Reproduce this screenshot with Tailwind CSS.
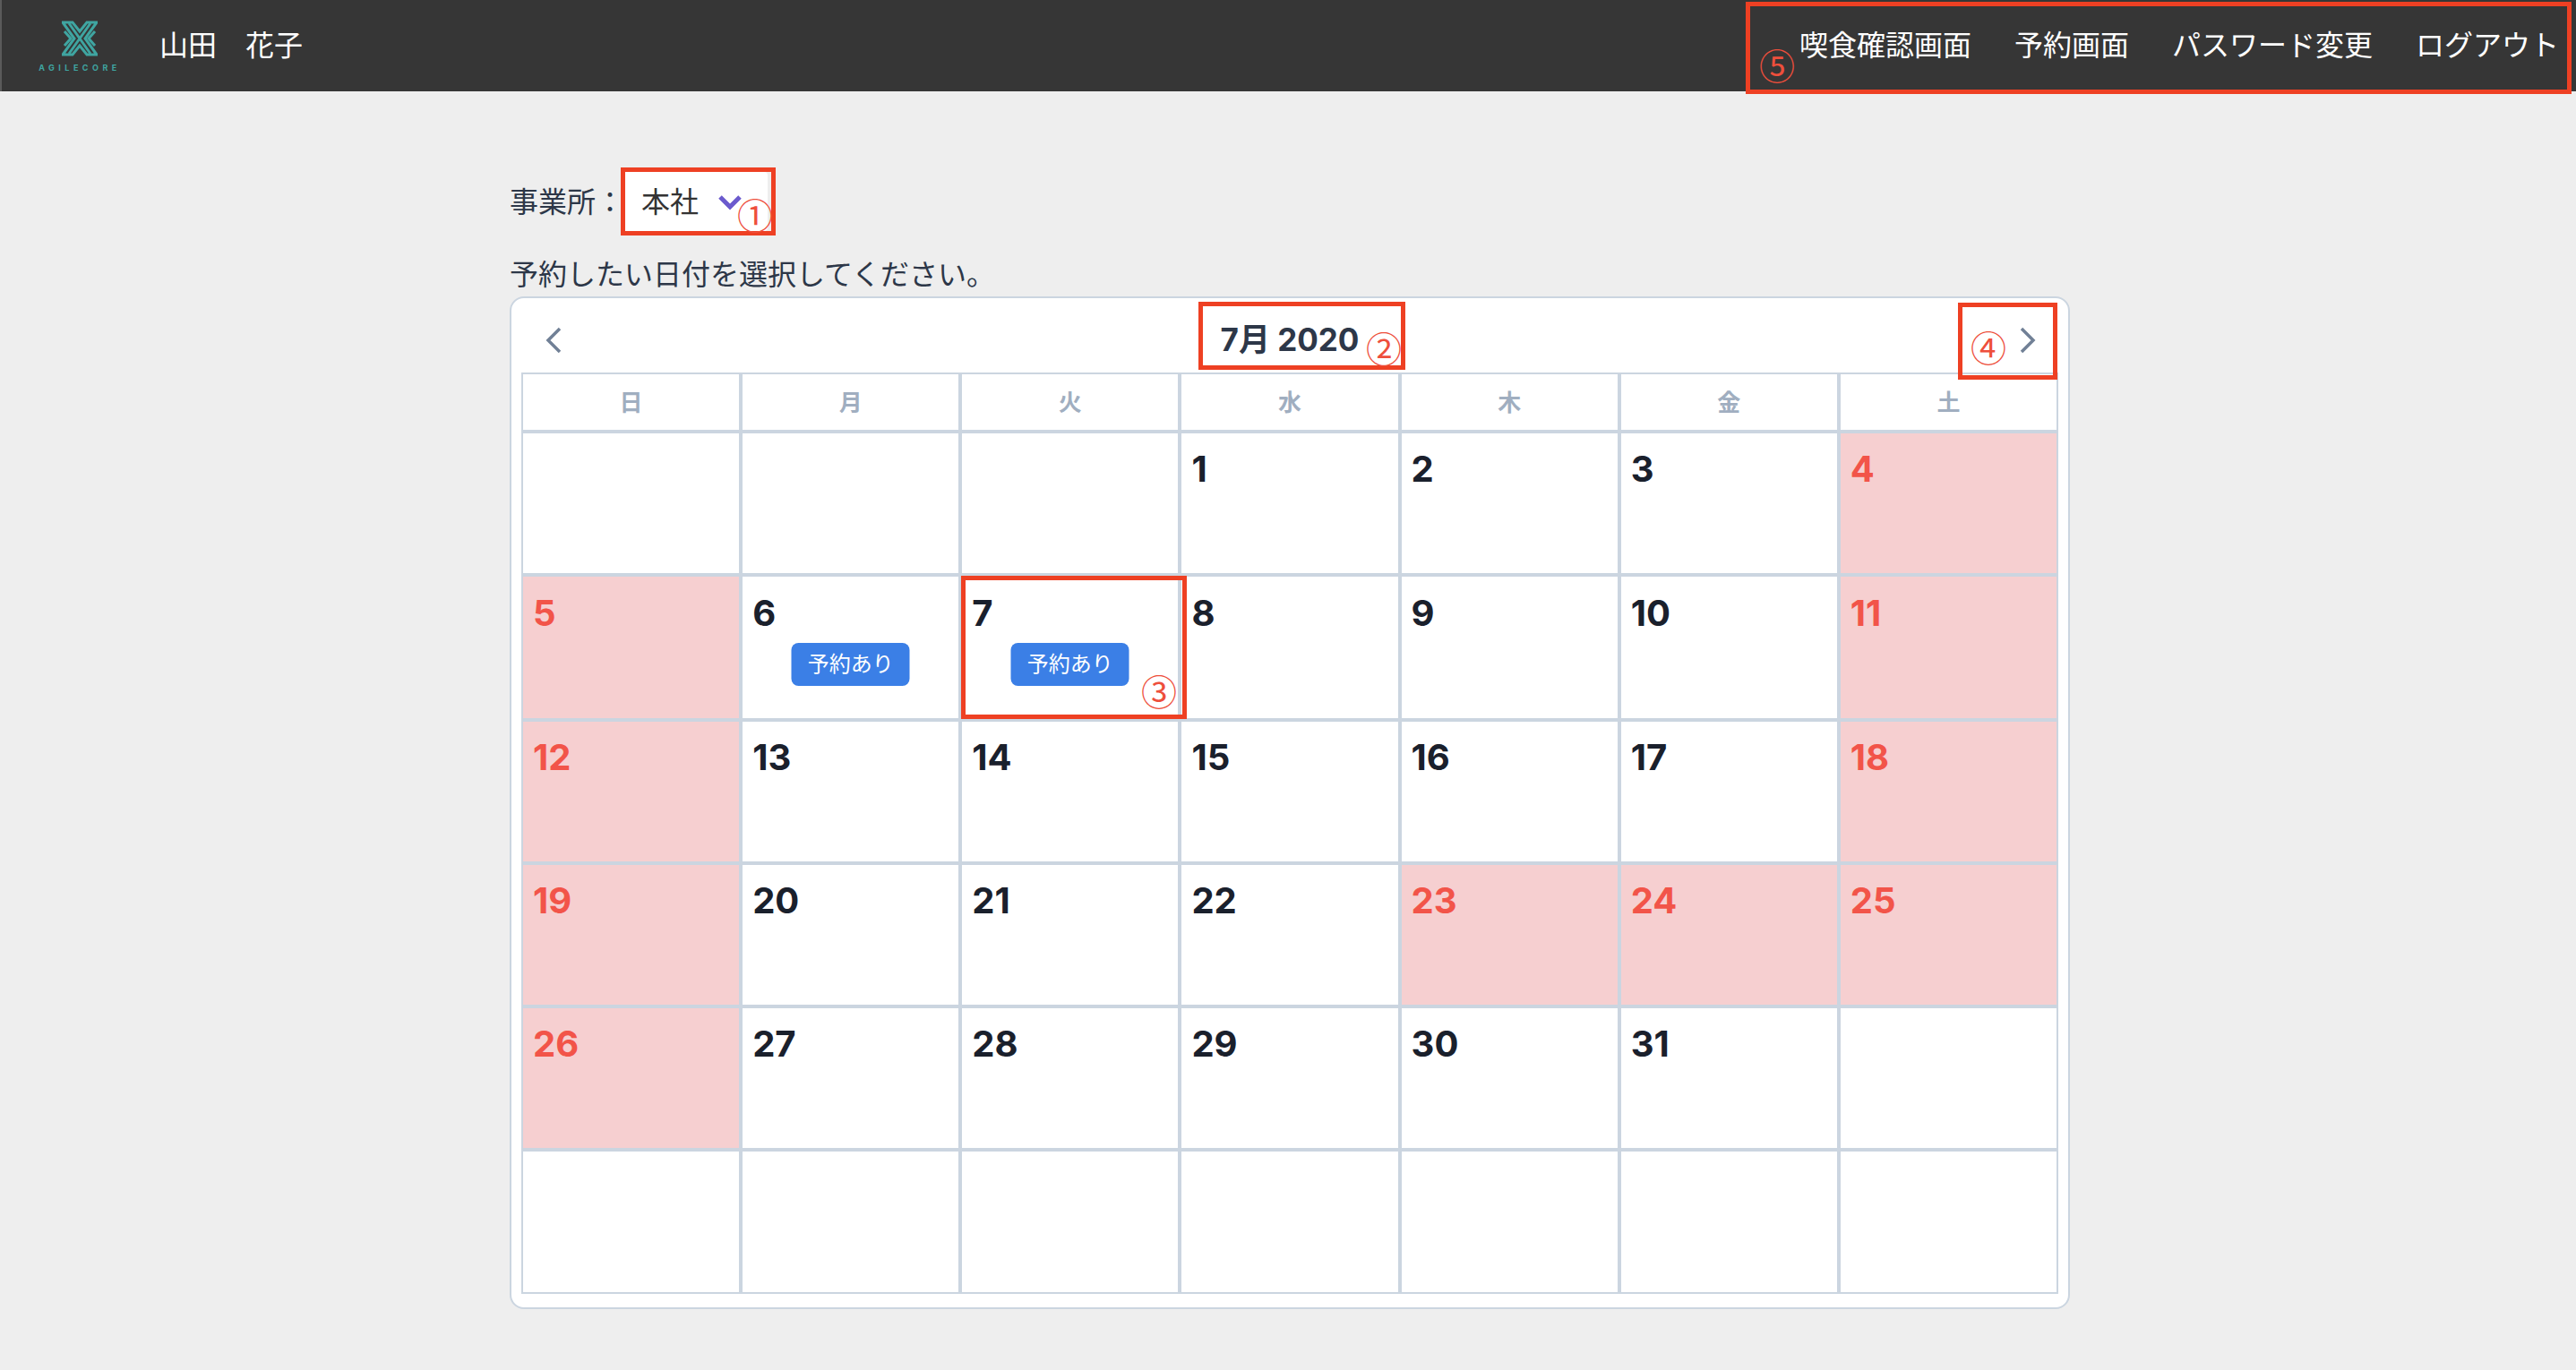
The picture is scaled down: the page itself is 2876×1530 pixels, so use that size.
<!DOCTYPE html>
<html lang="ja">
<head>
    <meta charset="UTF-8">
    <title>予約カレンダー</title>
    <script src="https://cdn.jsdelivr.net/npm/@tailwindcss/browser@4"></script>
</head>
<body class="bg-[#eeeeee] text-[#2d3748] font-['Inter','Noto_Sans_CJK_JP',sans-serif] text-[32px]">
<div class="relative h-[1530px] overflow-hidden">

    <header class="h-[102px] bg-[#363636] border-l-2 border-[#5a5a5a] flex items-center justify-between pr-[19px] text-white">
        <div class="flex items-center">
            <div class="w-[176px] flex flex-col items-center pr-[2px] pt-[1px]">
                <svg class="w-[40px] h-[40px]" viewBox="0 0 40 40" fill="none" stroke="#3fa5a1" stroke-width="3">
                    <path d="M1 2h11l8 10 8-10h11l-13 18 13 18h-11l-8-10-8 10H1l13-18z" />
                    <path d="M3 12l7 8-7 8M37 12l-7 8 7 8" />
                    <path d="M8 3l24 34M32 3L8 37" />
                </svg>
                <span class="mt-[9px] text-[9px] leading-[8px] font-bold tracking-[4.5px] text-[#3fa5a1] whitespace-nowrap">AGILECORE</span>
            </div>
            <span>山田　花子</span>
        </div>
        <nav class="flex gap-12">
            <a>喫食確認画面</a>
            <a>予約画面</a>
            <a>パスワード変更</a>
            <a>ログアウト</a>
        </nav>
    </header>

    <main class="w-[1742px] ml-[569px] pt-[90px]">
        <div class="flex items-center h-[66px]">
            <span class="w-[124px] whitespace-nowrap pt-[2px]">事業所：</span>
            <div class="w-[164px] h-[66px] bg-white rounded-[4px] flex items-center pl-[23px] pt-[2px] text-[#333333]">
                <span>本社</span>
                <svg class="ml-[22px] w-[26px] h-[18px]" viewBox="0 0 26 18" fill="none" stroke="#6b5acd" stroke-width="5"><path d="M2 3l11 11L24 3" /></svg>
            </div>
        </div>
        <p class="mt-[25px] leading-[48px]">予約したい日付を選択してください。</p>
        <section class="h-[1131px] bg-white border-2 border-[#cbd5e0] rounded-[16px] px-[11px]">
            <div class="h-[83px] flex items-center justify-between px-[27px] pt-[10px]">
                <svg class="w-[18px] h-[30px]" viewBox="0 0 18 30" fill="none" stroke="#718096" stroke-width="3.5"><path d="M16 2L3 15l13 13" /></svg>
                <h2 class="text-[35px] font-bold text-[#2d3748] ml-[-2px]">7月 2020</h2>
                <svg class="w-[18px] h-[30px] mr-[-2px]" viewBox="0 0 18 30" fill="none" stroke="#718096" stroke-width="3.5"><path d="M2 2l13 13L2 28" /></svg>
            </div>
            <div class="grid grid-cols-7 gap-[4px] p-[2px] bg-[#cbd5e0]">
                <div class="h-[62px] bg-white flex items-center justify-center text-[26px] font-semibold text-[#a0aec0]">日</div>
                <div class="h-[62px] bg-white flex items-center justify-center text-[26px] font-semibold text-[#a0aec0]">月</div>
                <div class="h-[62px] bg-white flex items-center justify-center text-[26px] font-semibold text-[#a0aec0]">火</div>
                <div class="h-[62px] bg-white flex items-center justify-center text-[26px] font-semibold text-[#a0aec0]">水</div>
                <div class="h-[62px] bg-white flex items-center justify-center text-[26px] font-semibold text-[#a0aec0]">木</div>
                <div class="h-[62px] bg-white flex items-center justify-center text-[26px] font-semibold text-[#a0aec0]">金</div>
                <div class="h-[62px] bg-white flex items-center justify-center text-[26px] font-semibold text-[#a0aec0]">土</div>

                <div class="h-[156px] bg-white"></div>
                <div class="h-[156px] bg-white"></div>
                <div class="h-[156px] bg-white"></div>
                <div class="h-[156px] bg-white pl-[11px] pt-[10px] text-[40px] leading-[60px] font-bold text-[#1a202c]">1</div>
                <div class="h-[156px] bg-white pl-[11px] pt-[10px] text-[40px] leading-[60px] font-bold text-[#1a202c]">2</div>
                <div class="h-[156px] bg-white pl-[11px] pt-[10px] text-[40px] leading-[60px] font-bold text-[#1a202c]">3</div>
                <div class="h-[156px] bg-[#f6cfd0] pl-[11px] pt-[10px] text-[40px] leading-[60px] font-bold text-[#f25449]">4</div>

                <div class="h-[158px] bg-[#f6cfd0] pl-[11px] pt-[11px] text-[40px] leading-[60px] font-bold text-[#f25449]">5</div>
                <div class="h-[158px] bg-white pl-[11px] pt-[11px] text-[40px] leading-[60px] font-bold text-[#1a202c]">6
                    <div class="mx-auto mt-[3px] w-[132px] h-[48px] rounded-[8px] bg-[#3b7fe6] flex items-center justify-center text-[24px] font-normal text-white -translate-x-[5.5px]">予約あり</div>
                </div>
                <div class="h-[158px] bg-white pl-[11px] pt-[11px] text-[40px] leading-[60px] font-bold text-[#1a202c]">7
                    <div class="mx-auto mt-[3px] w-[132px] h-[48px] rounded-[8px] bg-[#3b7fe6] flex items-center justify-center text-[24px] font-normal text-white -translate-x-[5.5px]">予約あり</div>
                </div>
                <div class="h-[158px] bg-white pl-[11px] pt-[11px] text-[40px] leading-[60px] font-bold text-[#1a202c]">8</div>
                <div class="h-[158px] bg-white pl-[11px] pt-[11px] text-[40px] leading-[60px] font-bold text-[#1a202c]">9</div>
                <div class="h-[158px] bg-white pl-[11px] pt-[11px] text-[40px] leading-[60px] font-bold text-[#1a202c]">10</div>
                <div class="h-[158px] bg-[#f6cfd0] pl-[11px] pt-[11px] text-[40px] leading-[60px] font-bold text-[#f25449]">11</div>

                <div class="h-[156px] bg-[#f6cfd0] pl-[11px] pt-[10px] text-[40px] leading-[60px] font-bold text-[#f25449]">12</div>
                <div class="h-[156px] bg-white pl-[11px] pt-[10px] text-[40px] leading-[60px] font-bold text-[#1a202c]">13</div>
                <div class="h-[156px] bg-white pl-[11px] pt-[10px] text-[40px] leading-[60px] font-bold text-[#1a202c]">14</div>
                <div class="h-[156px] bg-white pl-[11px] pt-[10px] text-[40px] leading-[60px] font-bold text-[#1a202c]">15</div>
                <div class="h-[156px] bg-white pl-[11px] pt-[10px] text-[40px] leading-[60px] font-bold text-[#1a202c]">16</div>
                <div class="h-[156px] bg-white pl-[11px] pt-[10px] text-[40px] leading-[60px] font-bold text-[#1a202c]">17</div>
                <div class="h-[156px] bg-[#f6cfd0] pl-[11px] pt-[10px] text-[40px] leading-[60px] font-bold text-[#f25449]">18</div>

                <div class="h-[156px] bg-[#f6cfd0] pl-[11px] pt-[10px] text-[40px] leading-[60px] font-bold text-[#f25449]">19</div>
                <div class="h-[156px] bg-white pl-[11px] pt-[10px] text-[40px] leading-[60px] font-bold text-[#1a202c]">20</div>
                <div class="h-[156px] bg-white pl-[11px] pt-[10px] text-[40px] leading-[60px] font-bold text-[#1a202c]">21</div>
                <div class="h-[156px] bg-white pl-[11px] pt-[10px] text-[40px] leading-[60px] font-bold text-[#1a202c]">22</div>
                <div class="h-[156px] bg-[#f6cfd0] pl-[11px] pt-[10px] text-[40px] leading-[60px] font-bold text-[#f25449]">23</div>
                <div class="h-[156px] bg-[#f6cfd0] pl-[11px] pt-[10px] text-[40px] leading-[60px] font-bold text-[#f25449]">24</div>
                <div class="h-[156px] bg-[#f6cfd0] pl-[11px] pt-[10px] text-[40px] leading-[60px] font-bold text-[#f25449]">25</div>

                <div class="h-[156px] bg-[#f6cfd0] pl-[11px] pt-[10px] text-[40px] leading-[60px] font-bold text-[#f25449]">26</div>
                <div class="h-[156px] bg-white pl-[11px] pt-[10px] text-[40px] leading-[60px] font-bold text-[#1a202c]">27</div>
                <div class="h-[156px] bg-white pl-[11px] pt-[10px] text-[40px] leading-[60px] font-bold text-[#1a202c]">28</div>
                <div class="h-[156px] bg-white pl-[11px] pt-[10px] text-[40px] leading-[60px] font-bold text-[#1a202c]">29</div>
                <div class="h-[156px] bg-white pl-[11px] pt-[10px] text-[40px] leading-[60px] font-bold text-[#1a202c]">30</div>
                <div class="h-[156px] bg-white pl-[11px] pt-[10px] text-[40px] leading-[60px] font-bold text-[#1a202c]">31</div>
                <div class="h-[156px] bg-white"></div>

                <div class="h-[157px] bg-white"></div>
                <div class="h-[157px] bg-white"></div>
                <div class="h-[157px] bg-white"></div>
                <div class="h-[157px] bg-white"></div>
                <div class="h-[157px] bg-white"></div>
                <div class="h-[157px] bg-white"></div>
                <div class="h-[157px] bg-white"></div>
            </div>
        </section>
    </main>

    <!-- annotations drawn over the screen -->
    <div class="absolute left-[693px] top-[187px] w-[173px] h-[76px] border-[5px] border-[#ee4023]"></div>
    <div class="absolute left-[1338px] top-[337px] w-[231px] h-[76px] border-[5px] border-[#ee4023]"></div>
    <div class="absolute left-[1073px] top-[643px] w-[252px] h-[160px] border-[5px] border-[#ee4023]"></div>
    <div class="absolute left-[2186px] top-[338px] w-[111px] h-[86px] border-[5px] border-[#ee4023]"></div>
    <div class="absolute left-[1949px] top-[2px] w-[922px] h-[103px] border-[5px] border-[#ee4023]"></div>

    <span class="absolute left-[823px] top-[215px] text-[40px] leading-[48px] text-[#ee4f3c] font-['Noto_Sans_CJK_JP']">①</span>
    <span class="absolute left-[1525px] top-[364px] text-[40px] leading-[48px] text-[#ee4f3c] font-['Noto_Sans_CJK_JP']">②</span>
    <span class="absolute left-[1274px] top-[747px] text-[40px] leading-[48px] text-[#ee4f3c] font-['Noto_Sans_CJK_JP']">③</span>
    <span class="absolute left-[2200px] top-[363px] text-[40px] leading-[48px] text-[#ee4f3c] font-['Noto_Sans_CJK_JP']">④</span>
    <span class="absolute left-[1964px] top-[48px] text-[40px] leading-[48px] text-[#ee4f3c] font-['Noto_Sans_CJK_JP']">⑤</span>
</div>
</body>
</html>
